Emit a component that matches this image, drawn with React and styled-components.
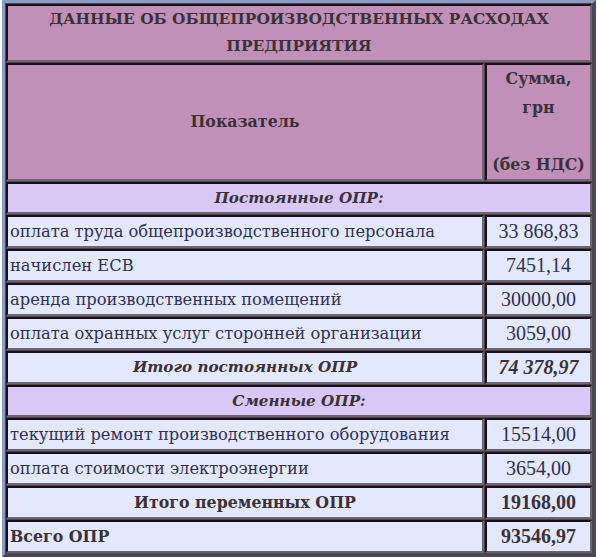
import React from 'react'
import styled, { createGlobalStyle } from 'styled-components'

const Global = createGlobalStyle`
  body {
    margin: 0;
    background: #ffffff;
    font-family: "DejaVu Serif", "Liberation Serif", serif;
  }
`

const Table = styled.table`
  width: 594px;
  margin: 0 0 0 2px;
  border-collapse: separate;
  border-spacing: 1px;
  border: 3px solid;
  border-color: #8b9cc6 #4c4652 #4c4652 #8b9cc6;
  background: #4c4652;
`

const Cell = styled.td`
  border: 2px solid;
  border-color: #1c0e16 #6c6672 #6c6672 #1c0e16;
  padding: ${p => (p.$tall ? '0' : '1px 2px')};
  line-height: ${p => p.$lh || '27px'};
  background: ${p => p.$bg || '#e4e8fc'};
  color: ${p => (p.$head ? '#3a3239' : '#2e3058')};
  text-align: ${p => p.$align || 'left'};
  font-weight: ${p => (p.$bold ? 'bold' : 'normal')};
  font-style: ${p => (p.$italic ? 'italic' : 'normal')};
  font-size: ${p => p.$size || '16.3px'};
  vertical-align: middle;
  white-space: nowrap;
`

const Num = styled(Cell)`
  width: 99px;
  text-align: center;
  font-family: "Liberation Serif", "DejaVu Serif", serif;
  font-size: 20px;
`

const mauve = '#c190b8'
const lilac = '#d9c8f5'

const fixed = [
  ['оплата труда общепроизводственного персонала', '33 868,83'],
  ['начислен ЕСВ', '7451,14'],
  ['аренда производственных помещений', '30000,00'],
  ['оплата охранных услуг сторонней организации', '3059,00'],
]

const variable = [
  ['текущий ремонт производственного оборудования', '15514,00'],
  ['оплата стоимости электроэнергии', '3654,00'],
]

const Section = ({ children }) => (
  <tr>
    <Cell colSpan={2} $bg={lilac} $head $bold $italic $align="center" $lh="26px" $size="15.2px">
      {children}
    </Cell>
  </tr>
)

const Row = ({ label, value }) => (
  <tr>
    <Cell>{label}</Cell>
    <Num>{value}</Num>
  </tr>
)

export default function App() {
  return (
    <>
      <Global />
      <Table>
        <tbody>
          <tr>
            <Cell colSpan={2} $bg={mauve} $head $bold $align="center" $tall $lh="27px" $size="15.4px">
              ДАННЫЕ ОБ ОБЩЕПРОИЗВОДСТВЕННЫХ РАСХОДАХ
              <br />
              ПРЕДПРИЯТИЯ
            </Cell>
          </tr>
          <tr>
            <Cell $bg={mauve} $head $bold $align="center" $tall $lh="28.5px" $size="15.8px">
              Показатель
            </Cell>
            <Cell $bg={mauve} $head $bold $align="center" $tall $lh="28.5px" $size="15.8px">
              Сумма,
              <br />
              грн
              <br />
              <br />
              (без НДС)
            </Cell>
          </tr>
          <Section>Постоянные ОПР:</Section>
          {fixed.map(([l, v]) => (
            <Row key={l} label={l} value={v} />
          ))}
          <tr>
            <Cell $head $bold $italic $align="center" $size="15.2px">Итого постоянных ОПР</Cell>
            <Num $head $bold $italic>74 378,97</Num>
          </tr>
          <Section>Сменные ОПР:</Section>
          {variable.map(([l, v]) => (
            <Row key={l} label={l} value={v} />
          ))}
          <tr>
            <Cell $head $bold $align="center" $size="15.8px">Итого переменных ОПР</Cell>
            <Num $head $bold>19168,00</Num>
          </tr>
          <tr>
            <Cell $head $bold $size="15.8px">Всего ОПР</Cell>
            <Num $head $bold>93546,97</Num>
          </tr>
        </tbody>
      </Table>
    </>
  )
}
